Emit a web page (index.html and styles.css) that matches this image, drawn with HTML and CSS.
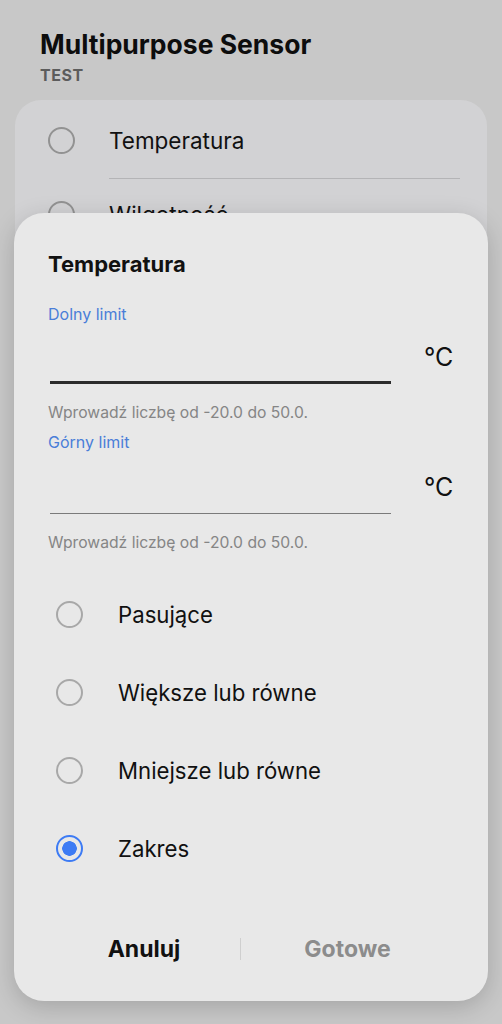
FILE: index.html
```html
<!DOCTYPE html>
<html lang="pl">
<head>
  <meta charset="UTF-8">
  <title>Multipurpose Sensor</title>
  <link rel="stylesheet" href="styles.css">
</head>
<body>
<div class="screen">
  <div class="header">
    <h1 class="title">Multipurpose Sensor</h1>
    <div class="subtitle">TEST</div>
  </div>

  <div class="card">
    <div class="row">
      <span class="radio"></span>
      <span class="row-label">Temperatura</span>
    </div>
    <div class="divider"></div>
    <div class="row">
      <span class="radio"></span>
      <span class="row-label">Wilgotność</span>
    </div>
  </div>

  <!-- okno dialogowe nad listą -->
  <div class="dialog">
    <h2 class="dialog-title">Temperatura</h2>

    <div class="field">
      <div class="field-label">Dolny limit</div>
      <div class="field-row">
        <div class="input"></div>
        <span class="unit">°C</span>
      </div>
      <div class="hint">Wprowadź liczbę od -20.0 do 50.0.</div>
    </div>

    <div class="field">
      <div class="field-label">Górny limit</div>
      <div class="field-row">
        <div class="input"></div>
        <span class="unit">°C</span>
      </div>
      <div class="hint">Wprowadź liczbę od -20.0 do 50.0.</div>
    </div>

    <div class="options">
      <div class="option"><span class="radio"></span><span>Pasujące</span></div>
      <div class="option"><span class="radio"></span><span>Większe lub równe</span></div>
      <div class="option"><span class="radio"></span><span>Mniejsze lub równe</span></div>
      <div class="option"><span class="radio checked"></span><span>Zakres</span></div>
    </div>

    <div class="buttons">
      <div class="btn cancel">Anuluj</div>
      <div class="btn-sep"></div>
      <div class="btn disabled">Gotowe</div>
    </div>
  </div>
</div>
</body>
</html>
```

FILE: styles.css
```css
body {
    margin: 0;
    background-color: #c8c8c8;
    font-family: Inter, Roboto, "Noto Sans", sans-serif;
    color: #111;
}

.screen {
    position: relative;
    width: 502px;
    height: 1024px;
    overflow: hidden;
}

.header {
    padding: 28px 40px 0;
}

.title {
    margin: 0;
    font-size: 26.5px;
    font-weight: 700;
    line-height: 32px;
    color: #0d0d0d;
}

.subtitle {
    margin-top: 6px;
    font-size: 16px;
    font-weight: 700;
    line-height: 18px;
    color: #5c5c5c;
    letter-spacing: 0.5px;
}

/* karta w tle */
.card {
    margin: 16px 15px 0;
    height: 200px;
    background-color: #d2d2d4;
    border-radius: 26px;
    padding: 14px 27px 0 33px;
}

.row {
    display: flex;
    align-items: center;
    height: 52px;
}

.row-label {
    margin-left: 34px;
    font-size: 22.5px;
}

.divider {
    margin: 12px 0 9px 61px;
    height: 1px;
    background-color: #b4b4b6;
}

.radio {
    box-sizing: border-box;
    width: 27px;
    height: 27px;
    flex: none;
    border-radius: 50%;
    border: 2px solid #929292;
}

.option .radio {
    border-color: #a8a8a8;
}

.option .radio.checked {
    border: 2.5px solid #3d7bf4;
    background: radial-gradient(circle, #3d7bf4 0 7px, transparent 7.5px);
}

/* dialog */
.dialog {
    position: absolute;
    left: 14px;
    top: 213px;
    width: 474px;
    height: 788px;
    box-sizing: border-box;
    background-color: #e8e8e8;
    border-radius: 30px;
    box-shadow: 0 6px 24px rgba(0, 0, 0, 0.18);
    padding: 38px 34px 0 34px;
    display: flex;
    flex-direction: column;
}

.dialog-title {
    margin: 0;
    font-size: 22px;
    font-weight: 700;
    line-height: 26px;
}

.field {
    margin-top: 27px;
}

.field + .field {
    margin-top: 10px;
}

.field-label {
    font-size: 16px;
    color: #4a7ed8;
    line-height: 20px;
}

.field-row {
    display: flex;
    align-items: flex-end;
}

/* pierwsze pole ma fokus */
.input {
    width: 341px;
    margin-left: 2px;
    height: 57px;
    border-bottom: 3px solid #2b2b2b;
}

.field + .field .input {
    height: 60.5px;
    border-bottom: 1.5px solid #7a7a7a;
}

.unit {
    margin-left: 33px;
    margin-bottom: 12px;
    font-size: 25px;
    line-height: 30px;
}

.hint {
    margin-top: 20px;
    font-size: 15.7px;
    color: #858585;
    line-height: 18px;
}

.options {
    margin-top: 24px;
}

.option {
    display: flex;
    align-items: center;
    height: 78px;
    padding-left: 8px;
    font-size: 22.2px;
}

.option .radio {
    margin-right: 35px;
}

.buttons {
    margin-top: auto;
    margin-bottom: 39px;
    display: flex;
    align-items: center;
}

.btn {
    flex: 1;
    text-align: center;
    font-size: 23px;
    font-weight: 700;
    line-height: 26px;
}

.btn.cancel {
    flex: none;
    width: 192px;
}

.btn.disabled {
    color: #8c8c8c;
}

.btn-sep {
    width: 1px;
    height: 22px;
    background-color: #cfcfcf;
}
```
